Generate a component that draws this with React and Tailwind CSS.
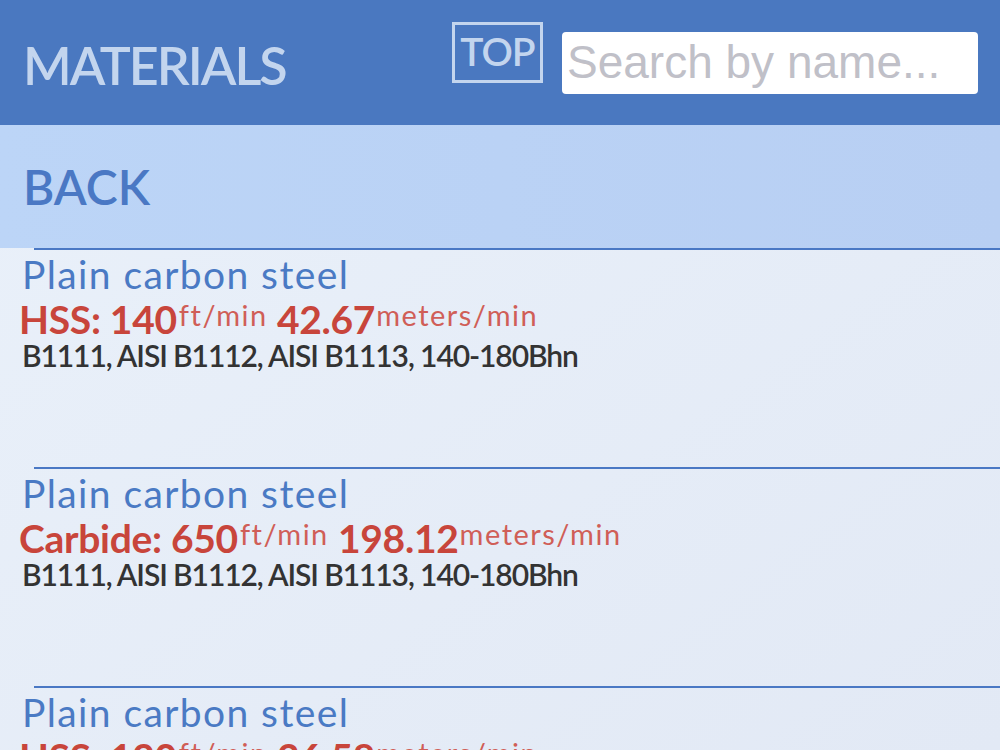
import React from "react";

const rows = [
  { tool: "HSS", ft: "140", m: "42.67" },
  { tool: "Carbide", ft: "650", m: "198.12" },
  { tool: "HSS", ft: "120", m: "36.58" },
];

function Row({ r }) {
  return (
    <div className="h-[219px] shrink-0 flex flex-col">
      <div className="ml-[34px] h-[2px] bg-[#4a78c4]" />
      <div className="pl-[22px] pt-[3px]">
        <div className="text-[39px] leading-[42px] tracking-[1.4px] text-[#4a7ac4] whitespace-nowrap">Plain carbon steel</div>
        <div className="-ml-[3px] text-[39px] leading-[40px] font-bold tracking-[-0.3px] text-[#c8453b] whitespace-nowrap">
          {r.tool}: {r.ft}
          <span className="ml-[2px] text-[29px] font-normal tracking-[1.5px] text-[#d05e57] align-[8px]">ft/min</span>{" "}
          {r.m}
          <span className="ml-[1px] text-[29px] font-normal tracking-[1.5px] text-[#d05e57] align-[8px]">meters/min</span>
        </div>
        <div className="text-[30px] leading-[33px] font-semibold tracking-[-1.1px] text-[#333333] whitespace-nowrap">
          B1111, AISI B1112, AISI B1113, 140-180Bhn
        </div>
      </div>
    </div>
  );
}

export default function App() {
  return (
    <div className="w-[1000px] h-[750px] overflow-hidden flex flex-col bg-gradient-to-br from-[#eaf1fa] to-[#e2e9f5]" style={{ fontFamily: "Lato, 'Open Sans', sans-serif" }}>
      <div className="h-[125px] shrink-0 bg-[#4a78c0] flex items-center pl-[23px] pr-[22px]">
        <div className="text-[52px] font-semibold text-[#c3d5ee] tracking-[-2px] mt-[4px]">MATERIALS</div>
        <div className="ml-auto mr-[19px] mb-[20px] w-[91px] h-[61px] border-[3px] border-[#c3d5ee] flex items-center justify-center pb-[3px] text-[39px] tracking-[-1px] font-semibold text-[#c3d5ee]">TOP</div>
        <div className="w-[416px] h-[62px] bg-white rounded-[4px] flex items-center pl-[5px] text-[46px] text-[#c0c0c8]" style={{ fontFamily: "'Liberation Sans', Arial, sans-serif" }}>
          Search by name...
        </div>
      </div>
      <div className="h-[123px] shrink-0 bg-gradient-to-r from-[#bcd5f7] via-[#bad2f5] to-[#b8cff3] flex items-center pl-[23px]">
        <div className="text-[48px] font-semibold text-[#4a78c4]">BACK</div>
      </div>
      <div className="flex flex-col">
        {rows.map((r, i) => (
          <Row key={i} r={r} />
        ))}
      </div>
    </div>
  );
}
